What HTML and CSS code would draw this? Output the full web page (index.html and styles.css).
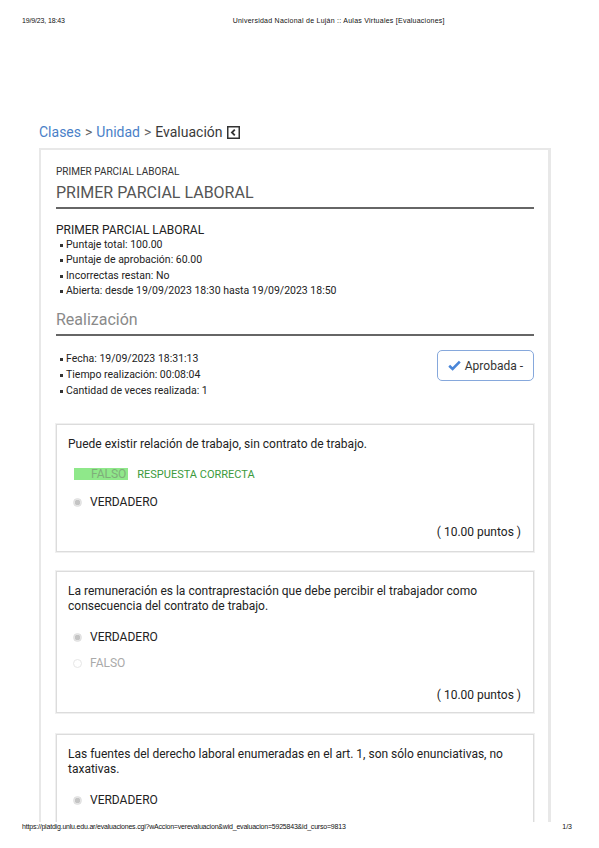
FILE: index.html
```html
<!DOCTYPE html>
<html lang="es">
<head>
<meta charset="utf-8">
<title>Universidad Nacional de Luján :: Aulas Virtuales [Evaluaciones]</title>
<link rel="stylesheet" href="styles.css">
</head>
<body>
<div class="page">
  <header class="print-header">
    <span class="ph-date">19/9/23, 18:43</span>
    <span class="ph-title">Universidad Nacional de Luján :: Aulas Virtuales [Evaluaciones]</span>
  </header>

  <div class="viewport">
    <nav class="breadcrumb">
      <a class="bc-link">Clases</a><span class="bc-sep">&gt;</span><a class="bc-link">Unidad</a><span class="bc-sep">&gt;</span><span class="bc-current">Evaluación</span>
      <span class="bc-back"><svg width="13" height="13" viewBox="0 0 13 13"><rect x="0.75" y="0.75" width="11.5" height="11.5" fill="none" stroke="#333" stroke-width="1.5"/><path d="M7.8 3.6 L4.9 6.5 L7.8 9.4" fill="none" stroke="#333" stroke-width="1.8"/></svg></span>
    </nav>

    <main class="card">
      <div class="eyebrow">PRIMER PARCIAL LABORAL</div>
      <h1 class="section-title">PRIMER PARCIAL LABORAL</h1>

      <div class="info-title">PRIMER PARCIAL LABORAL</div>
      <ul class="info-list">
        <li>Puntaje total: 100.00</li>
        <li>Puntaje de aprobación: 60.00</li>
        <li>Incorrectas restan: No</li>
        <li>Abierta: desde 19/09/2023 18:30 hasta 19/09/2023 18:50</li>
      </ul>

      <h2 class="section-title sub">Realización</h2>
      <div class="result-row">
        <ul class="info-list result-list">
          <li>Fecha: 19/09/2023 18:31:13</li>
          <li>Tiempo realización: 00:08:04</li>
          <li>Cantidad de veces realizada: 1</li>
        </ul>
        <span class="status-btn"><svg width="13" height="11" viewBox="0 0 13 11"><path d="M1.2 5.8 L4.6 9 L11.8 1.6" fill="none" stroke="#4a86d8" stroke-width="2.6"/></svg>Aprobada -</span>
      </div>

      <section class="question q1">
        <p class="q-text">Puede existir relación de trabajo, sin contrato de trabajo.</p>
        <div class="option correct-row">
          <span class="hl"><span class="radio faint"></span><span class="opt-label muted">FALSO</span></span>
          <span class="correct-tag">RESPUESTA CORRECTA</span>
        </div>
        <div class="option"><span class="radio checked"></span><span class="opt-label">VERDADERO</span></div>
        <div class="points">( 10.00 puntos )</div>
      </section>

      <section class="question q2">
        <p class="q-text">La remuneración es la contraprestación que debe percibir el trabajador como consecuencia del contrato de trabajo.</p>
        <div class="option"><span class="radio checked"></span><span class="opt-label">VERDADERO</span></div>
        <div class="option"><span class="radio faint"></span><span class="opt-label muted">FALSO</span></div>
        <div class="points">( 10.00 puntos )</div>
      </section>

      <section class="question q3">
        <p class="q-text">Las fuentes del derecho laboral enumeradas en el art. 1, son sólo enunciativas, no taxativas.</p>
        <div class="option"><span class="radio checked"></span><span class="opt-label">VERDADERO</span></div>
      </section>
    </main>
  </div>

  <footer class="print-footer">
    <span class="pf-url">https://platdig.unlu.edu.ar/evaluaciones.cgi?wAccion=verevaluacion&amp;wid_evaluacion=5925843&amp;id_curso=9813</span>
    <span>1/3</span>
  </footer>
</div>
</body>
</html>
```

FILE: styles.css
```css
html, body {
  margin: 0;
  padding: 0;
  background: #fff;
}
body {
  width: 599px;
  height: 848px;
  overflow: hidden;
  font-family: Roboto, "Noto Sans", Arial, sans-serif;
  color: #222;
}
.page {
  width: 599px;
  height: 848px;
  overflow: hidden;
  display: flex;
  flex-direction: column;
}

/* print header / footer */
.print-header {
  flex: none;
  height: 40px;
  display: flex;
  align-items: center;
  padding-left: 22px;
  font-family: "Liberation Sans", Arial, sans-serif;
  font-size: 7px;
  color: #111;
  letter-spacing: -0.15px;
}
.ph-title {
  margin-left: 168px;
  letter-spacing: 0.25px;
}
.viewport {
  flex: none;
  height: 782px;
  overflow: hidden;
}
.print-footer {
  flex: none;
  height: 26px;
  display: flex;
  justify-content: space-between;
  align-items: flex-start;
  padding: 0 27px 0 22px;
  font-family: "Liberation Sans", Arial, sans-serif;
  font-size: 7px;
  line-height: 10px;
  color: #111;
}
.pf-url { letter-spacing: -0.2px; }

/* breadcrumb */
.breadcrumb {
  margin: 82px 0 0 39px;
  height: 20px;
  display: flex;
  align-items: center;
  font-size: 14px;
  line-height: 20px;
}
.bc-link { color: #4a7fc8; }
.bc-sep { color: #666; margin: 0 4px; }
.bc-current { color: #3a3a3a; }
.bc-back { display: inline-flex; margin-left: 4px; }

/* card */
.card {
  margin: 6px 0 0 39px;
  width: 478px;
  min-height: 700px;
  padding: 16px 14px 40px 15px;
  border: 2px solid #e8e8e8;
  border-right-width: 3px;
  border-bottom: none;
}
.eyebrow {
  font-size: 10px;
  line-height: 12px;
  color: #333;
}
.section-title {
  margin: 5px 0 0;
  padding-bottom: 4px;
  font-size: 16px;
  font-weight: 400;
  line-height: 20px;
  color: #555;
  border-bottom: 2px solid #666;
}
.section-title.sub {
  margin-top: 12px;
  color: #8a8a8a;
}
.info-title {
  margin-top: 14px;
  font-size: 12px;
  line-height: 14px;
  color: #222;
}
.info-list {
  margin: 0;
  padding: 0;
  list-style: none;
  font-size: 10.5px;
  line-height: 15.3px;
  color: #222;
}
.info-list li {
  position: relative;
  padding-left: 10px;
}
.info-list li::before {
  content: "";
  position: absolute;
  left: 4px;
  top: 7px;
  width: 3px;
  height: 3px;
  background: #333;
}
.result-row {
  display: flex;
  justify-content: space-between;
  align-items: flex-start;
  margin-top: 14px;
}
.result-list { line-height: 16px; margin-top: 1px; }
.result-list li::before { top: 7px; }
.status-btn {
  display: inline-flex;
  align-items: center;
  gap: 4px;
  height: 29px;
  padding: 0 10px 0 10px;
  border: 1px solid #86a8dc;
  border-radius: 5px;
  font-size: 12px;
  color: #333;
}

/* questions */
.question {
  margin-top: 19px;
  padding: 12px 12px 11px 11px;
  border: 1px solid #dcdcdc;
  box-shadow: 0 0 0 1px #f0f0f0;
}
.q1 { margin-top: 25px; }
.q2 { padding-bottom: 9px; }
.q3 { margin-top: 21px; }
.q-text {
  margin: 0;
  font-size: 12px;
  line-height: 15px;
  color: #222;
}
.option {
  display: flex;
  align-items: center;
  height: 26px;
  font-size: 12px;
}
.q-text + .option { margin-top: 10px; }
.q-text + .correct-row { margin-top: 9px; }
.correct-row { margin-bottom: 2px; }
.radio {
  width: 9px;
  height: 9px;
  margin: 0 8px 0 5px;
  border-radius: 50%;
  box-sizing: border-box;
  border: 1px solid #ddd;
  background: #fff;
}
.radio.checked {
  border: 1px solid #e0e0e0;
  background: radial-gradient(circle, #c4c4c4 0 2.5px, #e6e6e6 3px);
}
.radio.faint {
  border-color: #e6e6e6;
}
.opt-label { color: #222; }
.opt-label.muted { color: #aaa; }
.hl {
  display: inline-flex;
  align-items: center;
  height: 12px;
  padding-right: 2px;
  margin-left: 6px;
  background: #8fe88a;
}
.hl .radio { margin-left: 0; border-color: #8fe88a; background: #8fe88a; }
.hl .opt-label { color: #7fae7a; }
.correct-tag {
  margin-left: 9px;
  font-size: 11px;
  color: #3c9a3c;
}
.points {
  margin-top: 10px;
  text-align: right;
  font-size: 12px;
  line-height: 15px;
  color: #222;
}
.q2 .points { margin-top: 12px; }
```
